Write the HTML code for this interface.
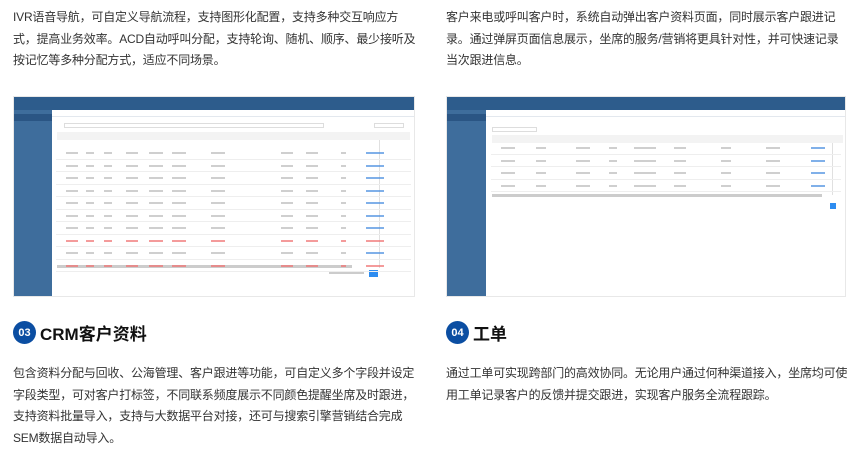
<!DOCTYPE html><html><head><meta charset="utf-8"><style>
*{margin:0;padding:0;box-sizing:border-box}
body{width:860px;height:453px;background:#fff;font-family:"Liberation Sans","Noto Sans CJK SC",sans-serif;color:#333;position:relative;overflow:hidden}
.p{position:absolute;font-size:12px;line-height:21.5px;color:#333;white-space:nowrap;letter-spacing:-0.2px}
.h{position:absolute;font-size:17px;font-weight:bold;color:#111;display:flex;align-items:center}
.c{width:23px;height:23px;border-radius:50%;background:#0b4ea2;color:#fff;font-size:11px;font-weight:bold;display:flex;align-items:center;justify-content:center;margin-right:4px;letter-spacing:0}
.s{position:absolute;background:#fff;overflow:hidden;border:1px solid #e8e8e8}
.top{position:absolute;left:0;top:0;right:0;height:13px;background:#2d5c8c}
.side{position:absolute;left:0;top:13px;bottom:0;width:38px;background:#3e6d9c}
.side i{display:block;height:7px;margin-top:1px;background:#3e6d9c}
.side i.a{background:#2a5584}
.row{position:absolute;height:1px;background:#eee}
.cell{position:absolute;height:2px;background:#bbb}
.red{background:#f07070}
.blue{background:#4a8fe0}
</style></head><body>
<div class="p" style="left:13px;top:7px">IVR语音导航，可自定义导航流程，支持图形化配置，支持多种交互响应方<br>式，提高业务效率。ACD自动呼叫分配，支持轮询、随机、顺序、最少接听及<br>按记忆等多种分配方式，适应不同场景。</div>
<div class="p" style="left:446px;top:7px">客户来电或呼叫客户时，系统自动弹出客户资料页面，同时展示客户跟进记<br>录。通过弹屏页面信息展示，坐席的服务/营销将更具针对性，并可快速记录<br>当次跟进信息。</div>

<div class="s" style="left:13px;top:96px;width:402px;height:201px">
<div class="top"></div>
<div class="side"><i style="margin-top:4px" class="a"></i><i></i><i></i><i></i><i></i><i></i><i></i></div>
<div style="position:absolute;left:38px;top:13px;right:0;height:7px;border-bottom:1px solid #e3e8ee"></div>
<div style="position:absolute;left:50px;top:26px;width:260px;height:5px;border:1px solid #ddd"></div>
<div style="position:absolute;left:360px;top:26px;width:30px;height:5px;border:1px solid #ddd"></div>
<div style="position:absolute;left:43px;top:35px;right:4px;height:8px;background:#f3f3f3"></div>
<div style="position:absolute;left:365px;top:43px;width:1px;height:128px;background:#e0e0e0"></div>
<div style="position:absolute;left:43px;top:168px;width:295px;height:3px;background:#ccc"></div>
<div style="position:absolute;left:355px;top:173px;width:9px;height:7px;background:#2d8cf0"></div>
<div style="position:absolute;left:315px;top:175px;width:35px;height:2px;background:#ccc"></div>
</div>

<div class="s" style="left:446px;top:96px;width:400px;height:201px">
<div class="top"></div>
<div class="side" style="width:39px"><i style="margin-top:4px" class="a"></i><i></i><i></i><i></i></div>
<div style="position:absolute;left:39px;top:13px;right:0;height:7px;border-bottom:1px solid #e3e8ee"></div>
<div style="position:absolute;left:45px;top:30px;width:45px;height:5px;border:1px solid #ddd"></div>
<div style="position:absolute;left:45px;top:38px;right:2px;height:8px;background:#f3f3f3"></div>
<div style="position:absolute;left:385px;top:46px;width:1px;height:52px;background:#e0e0e0"></div>
<div style="position:absolute;left:45px;top:97px;width:330px;height:3px;background:#ccc"></div>
<div style="position:absolute;left:383px;top:106px;width:6px;height:6px;background:#2d8cf0"></div>
</div>

<div class="h" style="left:13px;top:320px"><span class="c">03</span>CRM客户资料</div>
<div class="h" style="left:446px;top:320px"><span class="c">04</span>工单</div>
<div class="p" style="left:13px;top:363px">包含资料分配与回收、公海管理、客户跟进等功能，可自定义多个字段并设定<br>字段类型，可对客户打标签，不同联系频度展示不同颜色提醒坐席及时跟进，<br>支持资料批量导入，支持与大数据平台对接，还可与搜索引擎营销结合完成<br>SEM数据自动导入。</div>
<div class="p" style="left:446px;top:363px">通过工单可实现跨部门的高效协同。无论用户通过何种渠道接入，坐席均可使<br>用工单记录客户的反馈并提交跟进，实现客户服务全流程跟踪。</div>

<script>
function rows(l,t,n,h,w,cols,redRows){
 var s='';for(var i=0;i<n;i++){var y=t+i*h;s+='<div class="row" style="left:'+l+'px;top:'+(y+h-1)+'px;width:'+w+'px"></div>';
 cols.forEach(function(c,j){var cls=redRows.indexOf(i)>=0?'cell red':(j==cols.length-1?'cell blue':'cell');s+='<div class="'+cls+'" style="left:'+(l+c[0])+'px;top:'+(y+h/2-1)+'px;width:'+c[1]+'px;opacity:.7"></div>';});}
 document.body.insertAdjacentHTML('beforeend',s);}
rows(56,147,10,12.5,355,[[10,12],[30,8],[48,8],[70,12],[93,14],[116,14],[155,14],[225,12],[250,12],[285,5],[310,18]],[7,9]);
rows(491,142,4,12.5,350,[[10,14],[45,10],[85,14],[118,8],[143,22],[183,12],[230,10],[275,14],[320,14]],[]);
</script>
</body></html>
